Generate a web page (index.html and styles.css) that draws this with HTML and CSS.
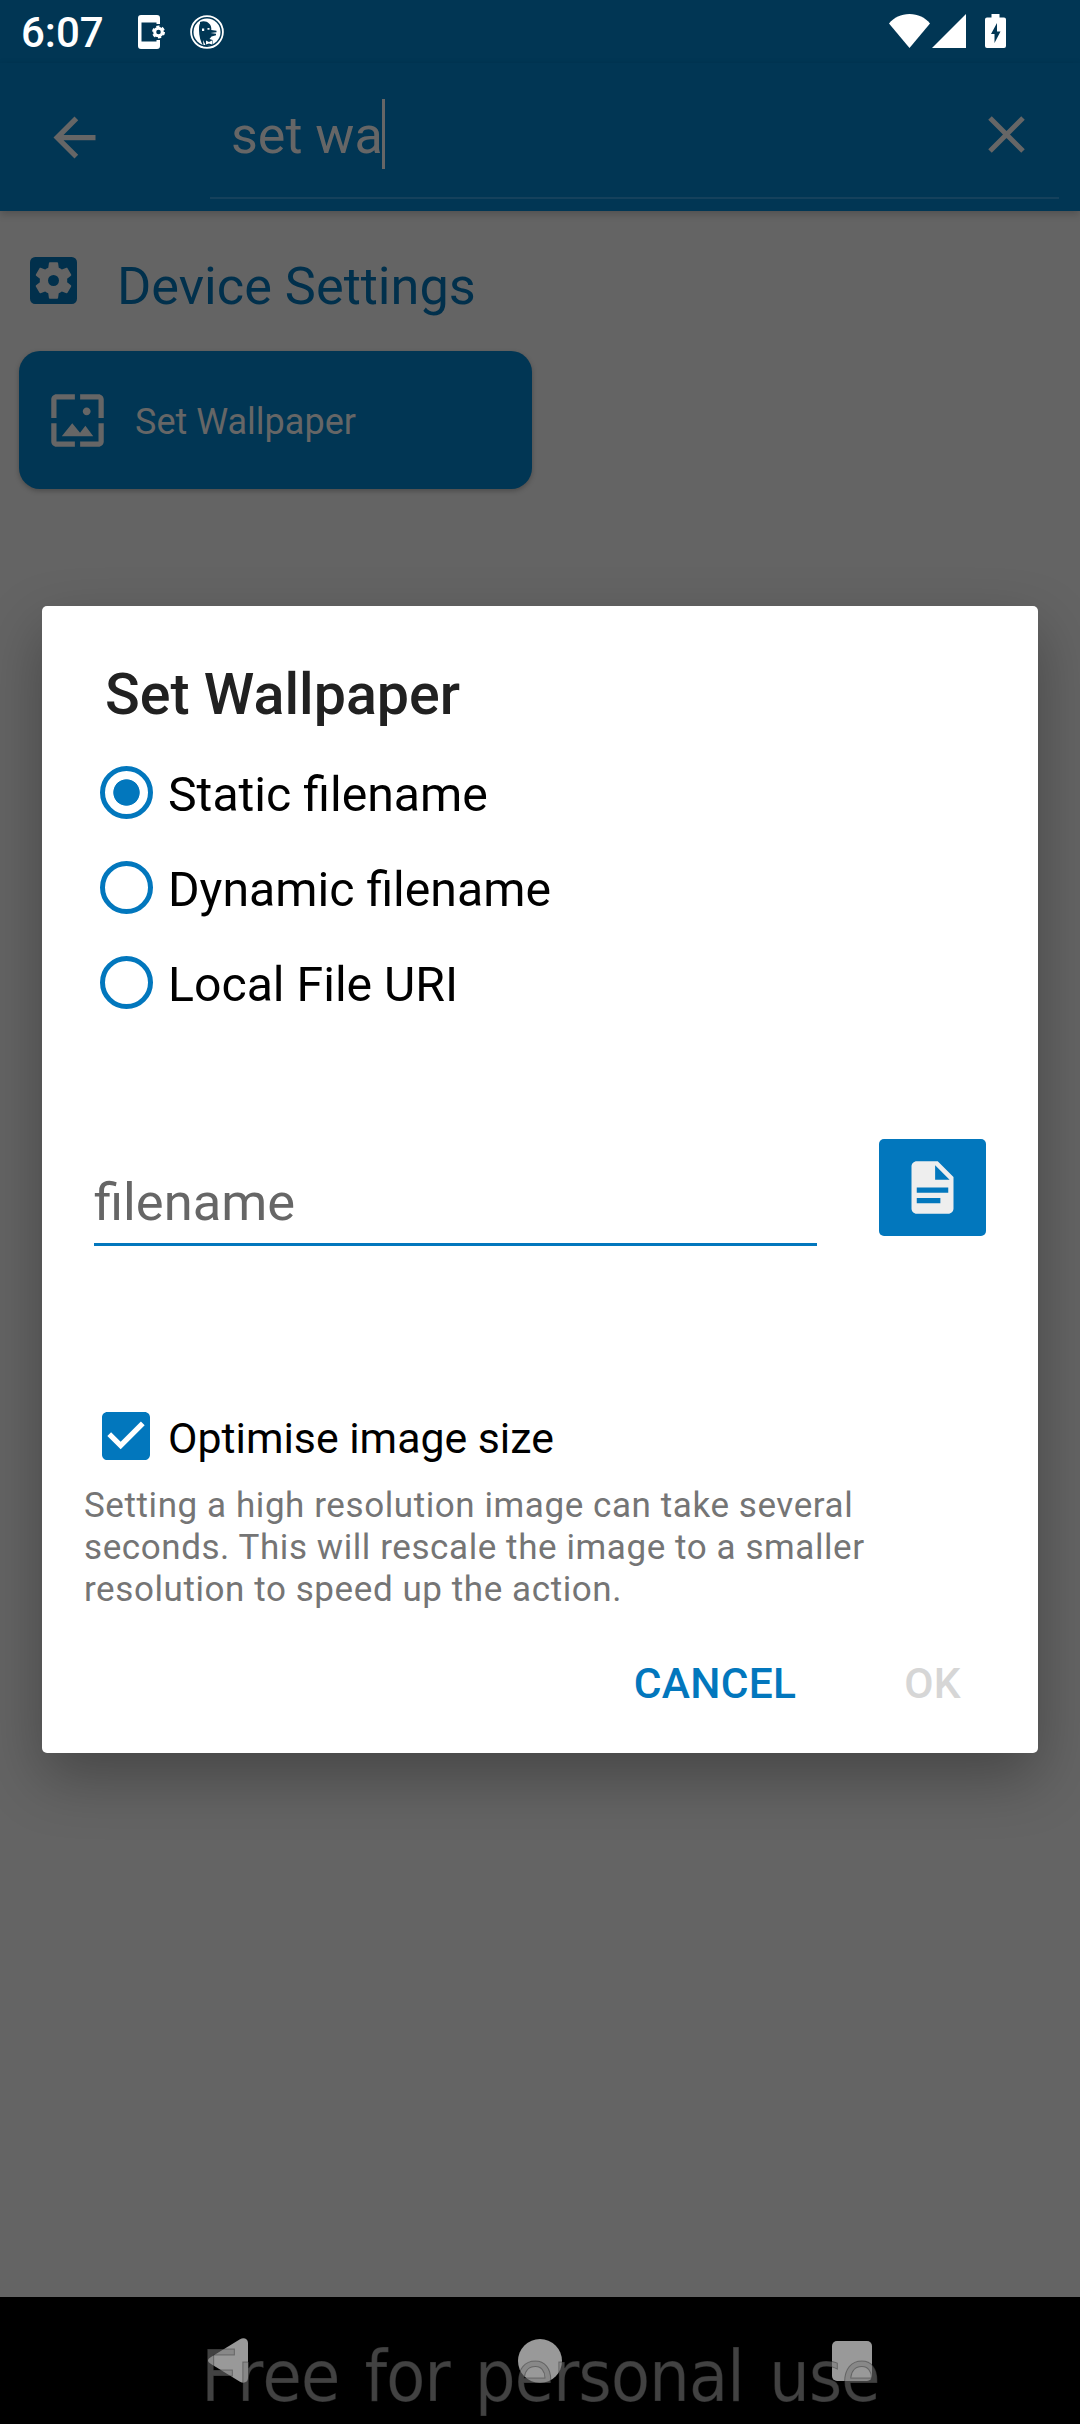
FILE: index.html
```
<!DOCTYPE html>
<html lang="en">
<head>
    <meta charset="UTF-8">
    <meta name="viewport" content="width=device-width, initial-scale=1.0">
    <title>Set Wallpaper</title>
    <link rel="stylesheet" href="styles.css">
</head>
<body>
    <!-- Status bar -->
    <header class="status-bar">
        <span class="clock">6:07</span>
        <svg class="status-phone" width="27" height="34" viewBox="0 0 27 34">
            <path fill="#fff" d="M3 0H19a3 3 0 0 1 3 3V9H18.500V7.500H3.500V26.500H18.500V25H22V31a3 3 0 0 1-3 3H3a3 3 0 0 1-3-3V3a3 3 0 0 1 3-3z"/>
            <circle cx="20.500" cy="17" r="3.800" fill="none" stroke="#fff" stroke-width="3"/>
            <circle cx="20.500" cy="17" r="5.500" fill="none" stroke="#fff" stroke-width="2" stroke-dasharray="3.200 2.560"/>
        </svg>
        <svg class="status-duck" width="34" height="34" viewBox="0 0 34 34">
            <circle cx="17" cy="17" r="15.900" fill="none" stroke="#fff" stroke-width="1.800"/>
            <circle cx="17" cy="17" r="13.500" fill="#fff"/>
            <path fill="#013654" d="M10 7c3-1.500 7-1 9 1.500 2 1.500 2.500 4 2.300 6.500l5.200.8v1.400l-6 .8 5.500.7v1.500l-4.500 1.300-2 2.500 3 1v5l-9 1.500c-3-4.500-4.500-11-4.500-16.500 0-3 0-5 1-6.500z"/>
            <path fill="#fff" d="M12 13.500h2.200v2.500H12zM17.500 13h2v1.800h-2zM13 25l2.500 5h-2zM16 25.500l3 1.500 3-1.500v4l-3-1-3 1z"/>
        </svg>
        <div class="status-right">
            <svg width="41" height="34" viewBox="0 0 41 34"><path fill="#fff" d="M20.500 34L0 9.500C5 3.500 12 0 20.500 0S36 3.500 41 9.500z"/></svg>
            <svg class="signal" width="34" height="34" viewBox="0 0 34 34"><path fill="#fff" d="M0 34L34 0V34z"/></svg>
            <svg class="battery" width="21" height="34" viewBox="0 0 21 34"><path fill="#fff" fill-rule="evenodd" d="M6.500 0h8v3.500H19a2 2 0 0 1 2 2V32a2 2 0 0 1-2 2H2a2 2 0 0 1-2-2V5.500a2 2 0 0 1 2-2H6.500zM12 9L6 20h3.500v9L15.500 17.500H12z"/></svg>
        </div>
    </header>

    <!-- Search bar -->
    <div class="app-bar">
        <svg class="back" width="63" height="63" viewBox="0 0 24 24"><path fill="#666" d="M20 11H7.830l5.590-5.590L12 4l-8 8 8 8 1.410-1.410L7.830 13H20v-2z"/></svg>
        <div class="search">
            <span class="query">set wa</span><span class="caret"></span>
            <svg class="clear" width="37" height="37" viewBox="0 0 37 37"><path stroke="#666" stroke-width="5" d="M2 2L35 35M35 2L2 35"/></svg>
        </div>
    </div>

    <main class="content">
        <h2 class="category">
            <svg width="47" height="47" viewBox="3 3 18 18">
                <rect x="3" y="3" width="18" height="18" rx="2" fill="#01304c"/>
                <path fill="#646464" transform="translate(12 12) scale(.73) translate(-12 -12)" d="M19.140 12.940c.04-.3.06-.61.06-.94 0-.32-.02-.64-.07-.94l2.030-1.580c.18-.14.23-.41.12-.61l-1.920-3.320c-.12-.22-.37-.29-.59-.22l-2.390.96c-.5-.38-1.030-.7-1.620-.94l-.36-2.540c-.04-.24-.24-.41-.48-.41h-3.840c-.24 0-.43.17-.47.41l-.36 2.540c-.59.24-1.130.57-1.620.94l-2.390-.96c-.22-.08-.47 0-.59.22L2.740 8.870c-.12.21-.08.47.12.61l2.030 1.580c-.05.3-.09.63-.09.94s.02.64.07.94l-2.030 1.580c-.18.14-.23.41-.12.61l1.920 3.320c.12.22.37.29.59.22l2.390-.96c.5.38 1.030.7 1.620.94l.36 2.540c.05.24.24.41.48.41h3.840c.24 0 .44-.17.47-.41l.36-2.540c.59-.24 1.130-.56 1.620-.94l2.390.96c.22.08.47 0 .59-.22l1.920-3.320c.12-.22.07-.47-.12-.61l-2.010-1.580z"/>
                <circle cx="12" cy="12" r="2.100" fill="#01304c"/>
            </svg>
            Device Settings
        </h2>
        <div class="card">
            <svg width="63" height="63" viewBox="0 0 24 24"><path fill="#666" d="M4 4h7V2H4c-1.100 0-2 .9-2 2v7h2V4zm6 9l-4 5h12l-3-4-2.030 2.710L10 13zm7-4.500c0-.83-.67-1.500-1.500-1.500S14 7.670 14 8.500s.67 1.500 1.500 1.500S17 9.330 17 8.500zM20 2h-7v2h7v7h2V4c0-1.100-.9-2-2-2zm0 18h-7v2h7c1.100 0 2-.9 2-2v-7h-2v7zM4 13H2v7c0 1.100.9 2 2 2h7v-2H4v-7z"/></svg>
            <span class="card-label">Set Wallpaper</span>
        </div>
    </main>

    <!-- Dialog -->
    <section class="dialog">
        <h1>Set Wallpaper</h1>
        <div class="options">
            <label class="option"><i class="radio checked"></i><span>Static filename</span></label>
            <label class="option"><i class="radio"></i><span>Dynamic filename</span></label>
            <label class="option"><i class="radio"></i><span>Local File URI</span></label>
        </div>
        <div class="file-row">
            <input type="text" class="file-input" placeholder="filename">
            <button class="file-button">
                <svg width="63" height="63" viewBox="0 0 24 24"><path fill="#eee" d="M14 2H6c-1.100 0-2 .9-2 2v16c0 1.100.89 2 2 2h12c1.100 0 2-.9 2-2V8l-6-6zm1 16H6v-2h9v2zm3-4H6v-2h12v2zm-5-5V3.500L18.500 9H13z"/></svg>
            </button>
        </div>
        <label class="optimise">
            <svg width="48" height="48" viewBox="3 3 18 18"><path fill="#0277bd" d="M19 3H5c-1.110 0-2 .9-2 2v14c0 1.100.89 2 2 2h14c1.110 0 2-.9 2-2V5c0-1.100-.89-2-2-2zm-9 14l-5-5 1.410-1.410L10 14.170l7.590-7.590L19 8l-9 9z"/></svg>
            <span>Optimise image size</span>
        </label>
        <p class="hint">Setting a high resolution image can take several<br>seconds. This will rescale the image to a smaller<br>resolution to speed up the action.</p>
        <div class="actions">
            <button class="cancel">CANCEL</button>
            <button class="ok" disabled>OK</button>
        </div>
    </section>

    <!-- System navigation -->
    <nav class="nav-bar">
        <svg width="40" height="45" viewBox="0 0 40 45"><path fill="#999" d="M3 19L32 1.200C36-1 40 1 40 5V40c0 4-4 6-8 3.800L3 26C-1 23.500-1 21.500 3 19z"/></svg>
        <span class="home"></span>
        <span class="recent"></span>
        <div class="watermark">Free for personal use</div>
    </nav>
</body>
</html>
```
FILE: styles.css
```
* {
    box-sizing: border-box;
}
body {
    margin: 0;
    width: 1080px;
    height: 2424px;
    position: relative;
    display: flex;
    flex-direction: column;
    background: #646464;
    font-family: Roboto, sans-serif;
    overflow: hidden;
}
svg {
    display: block;
    flex: none;
}
button {
    border: none;
    padding: 0;
    background: none;
    font-family: inherit;
}

/* Status bar */
.status-bar {
    height: 63px;
    flex: none;
    display: flex;
    align-items: center;
    padding: 0 74px 0 21px;
    background: #013654;
}
.clock {
    width: 117px;
    font-size: 42px;
    font-weight: 500;
    line-height: 50px;
    color: #fff;
    margin-top: 3px;
}
.status-phone {
    margin-right: 25px;
}
.status-right {
    display: flex;
    margin-left: auto;
    margin-bottom: 1px;
}
.signal {
    margin-left: 2px;
}
.battery {
    margin-left: 19px;
}

/* Search bar */
.app-bar {
    height: 148px;
    flex: none;
    display: flex;
    background: #013654;
    box-shadow: 0 3px 8px rgba(0, 0, 0, 0.2);
}
.back {
    margin: 43px 104px 0 43px;
}
.search {
    width: 849px;
    height: 136px;
    display: flex;
    align-items: flex-start;
    padding: 36px 34px 0 21px;
    border-bottom: 2px solid #15415c;
}
.query {
    width: 151px;
    font-size: 52px;
    line-height: 74px;
    white-space: nowrap;
    color: #666;
}
.caret {
    width: 3px;
    height: 70px;
    background: #666;
}
.clear {
    margin: 17px 0 0 auto;
}

.content {
    flex: 1;
}
.category {
    display: flex;
    gap: 40px;
    margin: 46px 0 0 30px;
    height: 94px;
    font-size: 52.3px;
    font-weight: 400;
    line-height: 58px;
    color: #01304c;
}
.card {
    width: 513px;
    height: 138px;
    margin-left: 19px;
    padding-left: 27px;
    display: flex;
    align-items: center;
    gap: 26px;
    background: #013654;
    border-radius: 21px;
    box-shadow: 0 2px 5px rgba(0, 0, 0, 0.25);
    font-size: 36px;
    color: #666;
}
.card-label {
    padding-top: 3px;
}

/* Dialog, lies over the page */
.dialog {
    position: absolute;
    top: 606px;
    left: 42px;
    width: 996px;
    height: 1147px;
    background: #fff;
    border-radius: 5px;
    box-shadow: 0 24px 60px rgba(0, 0, 0, 0.3);
}
.dialog h1 {
    margin: 55px 0 0 63px;
    font-size: 57.4px;
    font-weight: 500;
    line-height: 68px;
    color: #212121;
}
.options {
    margin: 16px 0 0 57.5px;
}
.option {
    display: flex;
    align-items: center;
    gap: 15.5px;
    height: 95px;
    font-size: 48.2px;
    color: #000;
}
.option span,
.optimise span {
    padding-top: 3px;
}
.radio {
    width: 53px;
    height: 53px;
    border: 5px solid #0277bd;
    border-radius: 50%;
}
.radio.checked {
    background: radial-gradient(circle, #0277bd 12.8px, #fff 13.6px);
}
.file-row {
    display: flex;
    margin: 109px 52px 0 52px;
}
.file-input {
    width: 723px;
    height: 107px;
    padding: 22px 0 0;
    border: none;
    border-bottom: 3px solid #0277bd;
    outline: none;
    background: none;
    font-family: inherit;
    font-size: 52.5px;
}
.file-input::placeholder {
    color: #666;
}
.file-button {
    width: 107px;
    height: 97px;
    margin-left: auto;
    display: flex;
    align-items: center;
    justify-content: center;
    background: #0277bd;
    border-radius: 5px;
}
.optimise {
    display: flex;
    align-items: center;
    gap: 18px;
    height: 60px;
    margin: 160px 0 0 60px;
    font-size: 42.8px;
    color: #000;
}
.hint {
    margin: 19px 0 0 42px;
    font-size: 35px;
    line-height: 42px;
    letter-spacing: 0.58px;
    white-space: nowrap;
    color: #757575;
}
.actions {
    display: flex;
    justify-content: flex-end;
    gap: 108px;
    margin: 48px 77px 0 0;
}
.actions button {
    font-size: 42.5px;
    font-weight: 500;
    line-height: 50px;
    letter-spacing: 0.3px;
}
.actions .cancel {
    color: #0277bd;
}
.actions .ok {
    color: #d6d6d6;
}

/* System navigation */
.nav-bar {
    position: relative;
    height: 127px;
    flex: none;
    display: flex;
    justify-content: space-between;
    align-items: center;
    padding: 0 208px;
    background: #000;
}
.home {
    width: 44px;
    height: 44px;
    border-radius: 50%;
    background: #999;
}
.recent {
    width: 40px;
    height: 40px;
    border-radius: 5px;
    background: #999;
}
.watermark {
    position: absolute;
    left: 201px;
    top: 37px;
    font-family: "DejaVu Sans Condensed", "DejaVu Sans", sans-serif;
    font-stretch: condensed;
    font-size: 71.7px;
    line-height: 84px;
    font-kerning: none;
    letter-spacing: -1.2px;
    word-spacing: 6px;
    white-space: nowrap;
    color: rgba(122, 122, 122, 0.54);
    -webkit-text-stroke: 1px rgba(0, 0, 0, 0.3);
}
```
